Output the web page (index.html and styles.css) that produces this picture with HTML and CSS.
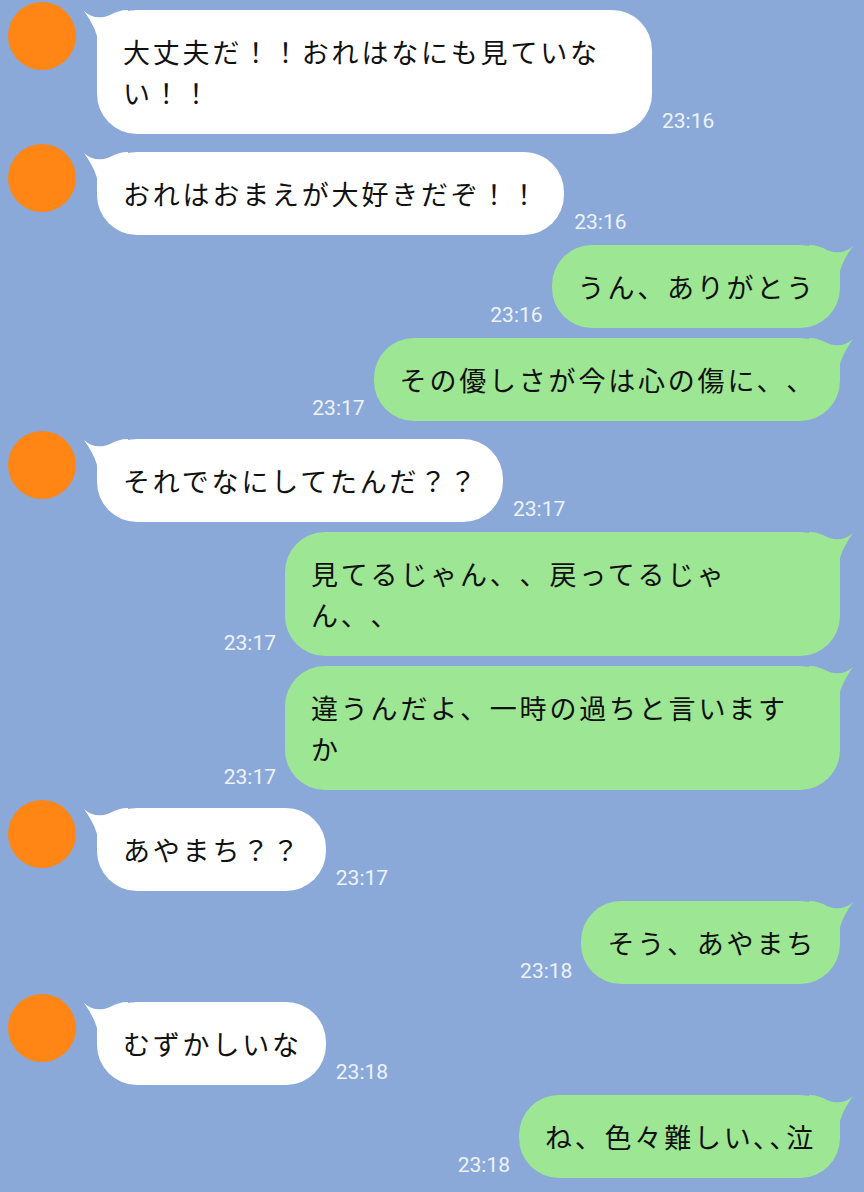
FILE: index.html
```html
<!DOCTYPE html>
<html lang="ja">
<head>
<meta charset="utf-8">
<title>トーク</title>
<link rel="stylesheet" href="styles.css">
</head>
<body>
<main class="chat">

  <div class="row row--in">
    <div class="avatar"></div>
    <div class="msg">
      <div class="bubble bubble--in">
        <svg class="tail" viewBox="0 0 44 40" width="44" height="40"><path d="M0 1 C7 8 17 9 26 5 C31 2 37 0 44 0 L44 40 L13 40 L13 26 C10 16 5 8 0 1 Z"/></svg>
        <span class="text">大丈夫だ！！おれはなにも見ていない！！</span>
      </div>
      <time class="time">23:16</time>
    </div>
  </div>

  <div class="row row--in">
    <div class="avatar"></div>
    <div class="msg">
      <div class="bubble bubble--in">
        <svg class="tail" viewBox="0 0 44 40" width="44" height="40"><path d="M0 1 C7 8 17 9 26 5 C31 2 37 0 44 0 L44 40 L13 40 L13 26 C10 16 5 8 0 1 Z"/></svg>
        <span class="text">おれはおまえが大好きだぞ！！</span>
      </div>
      <time class="time">23:16</time>
    </div>
  </div>

  <div class="row row--out">
    <div class="msg">
      <time class="time">23:16</time>
      <div class="bubble bubble--out">
        <svg class="tail" viewBox="0 0 44 40" width="44" height="40"><path d="M0 1 C7 8 17 9 26 5 C31 2 37 0 44 0 L44 40 L13 40 L13 26 C10 16 5 8 0 1 Z"/></svg>
        <span class="text">うん、ありがとう</span>
      </div>
    </div>
  </div>

  <div class="row row--out">
    <div class="msg">
      <time class="time">23:17</time>
      <div class="bubble bubble--out">
        <svg class="tail" viewBox="0 0 44 40" width="44" height="40"><path d="M0 1 C7 8 17 9 26 5 C31 2 37 0 44 0 L44 40 L13 40 L13 26 C10 16 5 8 0 1 Z"/></svg>
        <span class="text">その優しさが今は心の傷に、、</span>
      </div>
    </div>
  </div>

  <div class="row row--in">
    <div class="avatar"></div>
    <div class="msg">
      <div class="bubble bubble--in">
        <svg class="tail" viewBox="0 0 44 40" width="44" height="40"><path d="M0 1 C7 8 17 9 26 5 C31 2 37 0 44 0 L44 40 L13 40 L13 26 C10 16 5 8 0 1 Z"/></svg>
        <span class="text">それでなにしてたんだ？？</span>
      </div>
      <time class="time">23:17</time>
    </div>
  </div>

  <div class="row row--out">
    <div class="msg">
      <time class="time">23:17</time>
      <div class="bubble bubble--out">
        <svg class="tail" viewBox="0 0 44 40" width="44" height="40"><path d="M0 1 C7 8 17 9 26 5 C31 2 37 0 44 0 L44 40 L13 40 L13 26 C10 16 5 8 0 1 Z"/></svg>
        <span class="text">見てるじゃん、、戻ってるじゃん、、</span>
      </div>
    </div>
  </div>

  <div class="row row--out">
    <div class="msg">
      <time class="time">23:17</time>
      <div class="bubble bubble--out">
        <svg class="tail" viewBox="0 0 44 40" width="44" height="40"><path d="M0 1 C7 8 17 9 26 5 C31 2 37 0 44 0 L44 40 L13 40 L13 26 C10 16 5 8 0 1 Z"/></svg>
        <span class="text">違うんだよ、一時の過ちと言いますか</span>
      </div>
    </div>
  </div>

  <div class="row row--in">
    <div class="avatar"></div>
    <div class="msg">
      <div class="bubble bubble--in">
        <svg class="tail" viewBox="0 0 44 40" width="44" height="40"><path d="M0 1 C7 8 17 9 26 5 C31 2 37 0 44 0 L44 40 L13 40 L13 26 C10 16 5 8 0 1 Z"/></svg>
        <span class="text">あやまち？？</span>
      </div>
      <time class="time">23:17</time>
    </div>
  </div>

  <div class="row row--out">
    <div class="msg">
      <time class="time">23:18</time>
      <div class="bubble bubble--out">
        <svg class="tail" viewBox="0 0 44 40" width="44" height="40"><path d="M0 1 C7 8 17 9 26 5 C31 2 37 0 44 0 L44 40 L13 40 L13 26 C10 16 5 8 0 1 Z"/></svg>
        <span class="text">そう、あやまち</span>
      </div>
    </div>
  </div>

  <div class="row row--in">
    <div class="avatar"></div>
    <div class="msg">
      <div class="bubble bubble--in">
        <svg class="tail" viewBox="0 0 44 40" width="44" height="40"><path d="M0 1 C7 8 17 9 26 5 C31 2 37 0 44 0 L44 40 L13 40 L13 26 C10 16 5 8 0 1 Z"/></svg>
        <span class="text">むずかしいな</span>
      </div>
      <time class="time">23:18</time>
    </div>
  </div>

  <div class="row row--out">
    <div class="msg">
      <time class="time">23:18</time>
      <div class="bubble bubble--out">
        <svg class="tail" viewBox="0 0 44 40" width="44" height="40"><path d="M0 1 C7 8 17 9 26 5 C31 2 37 0 44 0 L44 40 L13 40 L13 26 C10 16 5 8 0 1 Z"/></svg>
        <span class="text">ね、色々難しい､､泣</span>
      </div>
    </div>
  </div>

</main>
</body>
</html>
```

FILE: styles.css
```css
html, body {
  margin: 0;
  padding: 0;
}

body {
  width: 864px;
  height: 1192px;
  overflow: hidden;
  background: #8aa9d9;
  font-family: "Noto Sans CJK JP", "Noto Sans", sans-serif;
  color: #111;
}

.chat {
  display: flex;
  flex-direction: column;
  gap: 10px;
  padding: 2px 24px 0 8px;
}

.row {
  display: flex;
  align-items: flex-start;
}

.row--out {
  justify-content: flex-end;
}

.avatar {
  flex: none;
  width: 68px;
  height: 68px;
  border-radius: 50%;
  background: #ff8514;
}

.msg {
  display: flex;
  align-items: flex-end;
  gap: 10px;
}

.row--in .msg {
  margin-left: 21px;
  margin-top: 8px;
}

.row--out .msg {
  gap: 9px;
}

.bubble {
  position: relative;
  box-sizing: border-box;
  max-width: 555px;
  padding: 21px 24px 21px 26px;
  border-radius: 40px;
  font-size: 27px;
  line-height: 41px;
  letter-spacing: 2.8px;
  line-break: strict;
  text-spacing-trim: space-all;
}

.bubble--in {
  background: #ffffff;
}

.bubble--out {
  background: #9de693;
}

.tail {
  position: absolute;
  top: 0;
  display: block;
}

.bubble--in .tail {
  left: -13px;
  fill: #ffffff;
}

.bubble--out .tail {
  right: -13px;
  fill: #9de693;
  transform: scaleX(-1);
}

.text {
  position: relative;
}

.time {
  flex: none;
  font-family: Roboto, "Liberation Sans", sans-serif;
  font-size: 21px;
  line-height: 21px;
  color: #eef3fb;
  margin-bottom: 2px;
}
```
